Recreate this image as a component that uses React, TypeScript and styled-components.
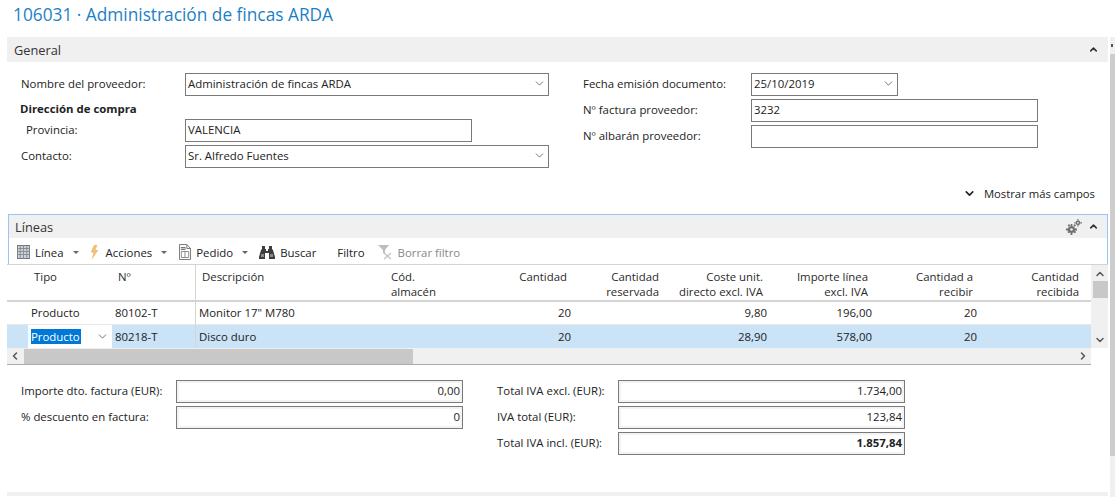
import React from "react";
import styled, { createGlobalStyle } from "styled-components";
import { ChevronDown, ChevronUp, ChevronLeft, ChevronRight } from "lucide-react";

const GlobalStyle = createGlobalStyle`
  html, body {
    margin: 0;
    padding: 0;
    background: #fff;
    overflow: hidden;
  }
  body {
    font-family: "Open Sans", "Noto Sans", sans-serif;
    font-size: 11.4px;
    color: #222;
  }
`;

const Shell = styled.div`
  display: flex;
  width: 1115px;
  height: 497px;
  overflow: hidden;
`;

const Page = styled.main`
  width: 1101px;
  margin-left: 7px;
  display: flex;
  flex-direction: column;
`;

const Title = styled.h1`
  margin: 0;
  height: 37px;
  padding: 3px 0 0 6px;
  box-sizing: border-box;
  font-size: 17.3px;
  line-height: 24px;
  font-weight: 400;
  color: #1c7fc6;
`;

const Band = styled.div`
  height: 25px;
  background: #f0f0f0;
  display: flex;
  align-items: center;
  justify-content: space-between;
  padding: 0 9px 0 7px;
  font-size: 12.8px;
  color: #333;
`;

const BandTools = styled.div`
  display: flex;
  align-items: center;
  gap: 6px;
  color: #333;
`;

const GeneralBody = styled.section`
  display: grid;
  grid-template-columns: 562px 1fr;
  padding: 11px 0 0 14px;
  height: 112px;
`;

const Column = styled.div`
  display: flex;
  flex-direction: column;
`;

const Row = styled.div<{ $labelWidth: number; $indent?: number }>`
  display: flex;
  align-items: center;
  height: 23px;
  margin-bottom: 3px;
  > label {
    width: ${(p) => p.$labelWidth - (p.$indent ?? 0)}px;
    margin-left: ${(p) => p.$indent ?? 0}px;
    padding-bottom: 2px;
    box-sizing: border-box;
    flex: none;
  }
`;

const GroupLabel = styled.div`
  height: 20px;
  line-height: 20px;
  font-weight: 700;
  margin-left: -1px;
  color: #222;
`;

const Field = styled.div<{ $width: number; $align?: string; $bold?: boolean; $shaded?: boolean }>`
  width: ${(p) => p.$width}px;
  height: 23px;
  box-sizing: border-box;
  border: 1px solid #7a7a7a;
  display: flex;
  align-items: center;
  justify-content: ${(p) => (p.$align === "right" ? "flex-end" : "space-between")};
  padding: 0 2px 2px;
  font-weight: ${(p) => (p.$bold ? 700 : 400)};
  color: #222;
  background: #fff;
  ${(p) => p.$shaded && "box-shadow: inset 0 0 0 2px #f3f3f3;"}
`;

const FieldChevron = styled(ChevronDown)`
  width: 13px;
  height: 13px;
  color: #555;
  stroke-width: 1.5;
`;

const MoreRow = styled.div`
  height: 16px;
  display: flex;
  justify-content: flex-end;
  align-items: center;
  gap: 8px;
  padding-right: 13px;
  margin-bottom: 13px;
  color: #222;
  font-size: 11.3px;
`;

const LinesPanel = styled.section`
  border: 1px solid #9cc4f2;
  border-bottom: none;
  height: 50px;
  box-sizing: border-box;
  margin-left: 1px;
`;

const LinesBand = styled(Band)`
  height: 23px;
  padding: 0 8px 0 6px;
`;

const Toolbar = styled.div`
  height: 25px;
  box-sizing: border-box;
  display: flex;
  align-items: center;
  padding: 3px 0 0 8px;
`;

const ToolButton = styled.div<{ $disabled?: boolean; $gap?: number }>`
  display: flex;
  align-items: center;
  gap: 5px;
  margin-right: ${(p) => p.$gap ?? 12}px;
  color: ${(p) => (p.$disabled ? "#888" : "#222")};
`;

const Caret = styled.span`
  width: 0;
  height: 0;
  border-left: 3px solid transparent;
  border-right: 3px solid transparent;
  border-top: 3px solid #666;
  margin-left: 4px;
`;

const GridWrap = styled.div`
  display: grid;
  grid-template-columns: 1084px 17px;
  border-top: 1px solid #d4d4d4;
`;

const DataGrid = styled.div`
  display: grid;
  grid-template-columns: 21px 84px 83px 193px 92px 95px 92px 104px 105px 105px 110px;
`;

const HeadCell = styled.div<{ $right?: number; $divider?: boolean; $pad?: number }>`
  height: 37px;
  box-sizing: border-box;
  border-bottom: 2px solid #d4d4d4;
  padding: 4px ${(p) => p.$right ?? 0}px 0 ${(p) => p.$pad ?? 6}px;
  text-align: ${(p) => (p.$right ? "right" : "left")};
  line-height: 15px;
  white-space: pre-line;
  color: #2a2a2a;
  ${(p) => p.$divider && "border-left: 1px solid #d4d4d4;"}
`;

const Cell = styled.div<{ $right?: boolean; $selected?: boolean; $divider?: boolean; $pad?: number }>`
  height: 23px;
  box-sizing: border-box;
  padding: 0 ${(p) => (p.$right ? 4 : 0)}px 0 ${(p) => p.$pad ?? 4}px;
  line-height: ${(p) => (p.$selected ? 23 : 22)}px;
  text-align: ${(p) => (p.$right ? "right" : "left")};
  background: ${(p) => (p.$selected ? "#cae3f7" : "#fff")};
  color: #222;
  ${(p) => !p.$selected && "border-bottom: 1px solid #e8e8e8;"}
  ${(p) => p.$divider && "border-left: 1px solid #d4d4d4;"}
`;

const EditCell = styled.div`
  height: 23px;
  background: #fff;
  display: flex;
  align-items: center;
  justify-content: space-between;
  padding: 0 2px 0 3px;
  margin-right: 1px;
`;

const SelectedText = styled.span`
  background: #0078d7;
  color: #fff;
  line-height: 15px;
  padding: 0 1px 0 0;
`;

const VScroll = styled.div`
  background: #f0f0f0;
  display: flex;
  flex-direction: column;
  align-items: center;
  justify-content: space-between;
  padding: 3px 0 2px;
  position: relative;
`;

const VThumb = styled.div`
  position: absolute;
  top: 16px;
  left: 2px;
  width: 15px;
  height: 17px;
  background: #c8c8c8;
`;

const HScroll = styled.div`
  width: 1084px;
  height: 17px;
  box-sizing: border-box;
  background: #f0f0f0;
  border-bottom: 1px solid #ababab;
  display: flex;
  align-items: center;
  justify-content: space-between;
  padding-right: 2px;
`;

const HThumbGroup = styled.div`
  display: flex;
  align-items: center;
  height: 100%;
`;

const HThumb = styled.div`
  width: 389px;
  height: 15px;
  background: #c8c8c8;
  margin-left: 3px;
`;

const ScrollArrowLeft = styled(ChevronLeft)`
  width: 12px;
  height: 12px;
  margin-left: 2px;
  color: #555;
  stroke-width: 3;
`;

const ScrollArrow = styled.span`
  display: inline-flex;
  color: #555;
  svg {
    width: 12px;
    height: 12px;
    stroke-width: 3;
  }
`;

const Totals = styled.section`
  display: grid;
  grid-template-columns: 476px 1fr;
  padding: 15px 0 0 14px;
  height: 127px;
  box-sizing: border-box;
`;

const BottomBand = styled.div`
  height: 4px;
  background: #f0f0f0;
`;

const PageScroll = styled.div`
  margin: 37px 0 0 2px;
  width: 5px;
  height: 460px;
  display: flex;
  flex-direction: column;
  background: #f0f0f0;
`;

const PageScrollCap = styled.div`
  height: 17px;
  display: flex;
  align-items: center;
  &::before {
    content: "";
    width: 2px;
    height: 3px;
    margin-left: 1px;
    background: #555;
  }
`;

const PageScrollThumb = styled.div`
  height: 402px;
  background: #cdcdcd;
`;

function GridIcon() {
  return (
    <svg width="13" height="14" viewBox="0 0 14 14" preserveAspectRatio="none">
      <rect x="0.5" y="0.5" width="13" height="13" fill="#c9d3e2" stroke="#777" />
      <path d="M0.5 3.5h13M0.5 6.5h13M0.5 9.5h13M3.5 0.5v13M7 0.5v13M10.5 0.5v13" stroke="#8c8c8c" strokeWidth="1" />
    </svg>
  );
}

function BoltIcon() {
  return (
    <svg width="12" height="15" viewBox="0 0 12 15">
      <path d="M5 0 8.5 0 6.5 5 9.5 5 2.5 15 4.4 7.6 1.5 7.6Z" fill="#f2be7c" />
    </svg>
  );
}

function DocIcon() {
  return (
    <svg width="12" height="16" viewBox="0 0 13 16" fill="none" preserveAspectRatio="none">
      <path d="M0.5 0.5h8l4 4v11h-12z" fill="#fff" stroke="#777" />
      <path d="M8.5 0.5v4h4" stroke="#777" />
      <rect x="2.5" y="3.5" width="4" height="2" fill="#b8cbe2" stroke="#777" />
      <path d="M2.5 7.5h8v6h-8zM6.5 7.5v6" stroke="#888" />
    </svg>
  );
}

function BinocularsIcon() {
  return (
    <svg width="16" height="13" viewBox="0 0 16 13">
      <path d="M3 0h3v3h1v2h2V3h1V0h3v3l1 1 2 7v2H10V7H6v6H0v-2l2-7 1-1z" fill="#3d3d3d" />
      <path d="M2 8h3v3H2zM11 8h3v3h-3z" fill="#8a8a8a" />
    </svg>
  );
}

function ClearFilterIcon() {
  return (
    <svg width="15" height="16" viewBox="0 0 15 16">
      <path d="M0 1h11L7 6v4L5 9V6z" fill="#bdbdbd" />
      <path d="M6 9l7 6M13 9l-7 6" stroke="#c4c4c4" strokeWidth="1.4" />
    </svg>
  );
}

function GearsIcon() {
  return (
    <svg width="16" height="16" viewBox="0 0 16 16">
      <g fill="#707070">
        <circle cx="5.5" cy="10.5" r="3.6" />
        <path d="M4.6 5h1.8v2h-1.8zM4.6 14h1.8v2h-1.8zM0 9.6h2v1.8H0zM9 9.6h2v1.8H9zM1.6 6.4l1.3-1.3 1.3 1.3-1.3 1.3zM7.6 13l1.3-1.3 1.3 1.3-1.3 1.3zM7.4 6.4l1.3-1.3 1.3 1.3-1.3 1.3zM1.4 13l1.3-1.3 1.3 1.3-1.3 1.3z" />
        <circle cx="12" cy="3.8" r="2.4" />
        <path d="M11.4 0h1.2v1.4h-1.2zM11.4 6.2h1.2v1.4h-1.2zM8.2 3.2h1.4v1.2H8.2zM14.4 3.2H16v1.2h-1.6z" />
      </g>
      <circle cx="5.5" cy="10.5" r="1.3" fill="#f0f0f0" />
      <circle cx="12" cy="3.8" r="0.9" fill="#f0f0f0" />
    </svg>
  );
}

const columns = [
  { key: "cod", title: "Cód.\nalmacén", pad: 3 },
  { key: "cantidad", title: "Cantidad", right: 8 },
  { key: "reservada", title: "Cantidad\nreservada", right: 8 },
  { key: "coste", title: "Coste unit.\ndirecto excl. IVA", right: 8 },
  { key: "importe", title: "Importe línea\nexcl. IVA", right: 8 },
  { key: "recibir", title: "Cantidad a\nrecibir", right: 8 },
  { key: "recibida", title: "Cantidad\nrecibida", right: 12 },
];

const rows = [
  { tipo: "Producto", no: "80102-T", desc: 'Monitor 17" M780', cantidad: "20", coste: "9,80", importe: "196,00", recibir: "20" },
  { tipo: "Producto", no: "80218-T", desc: "Disco duro", cantidad: "20", coste: "28,90", importe: "578,00", recibir: "20" },
];

export default function App() {
  return (
    <Shell>
      <GlobalStyle />
      <Page>
        <Title>106031 · Administración de fincas ARDA</Title>
        <Band>
          General
          <BandTools>
            <ChevronUp size={11} strokeWidth={3.5} />
          </BandTools>
        </Band>
        <GeneralBody>
          <Column>
            <Row $labelWidth={164}>
              <label>Nombre del proveedor:</label>
              <Field $width={364}>
                Administración de fincas ARDA
                <FieldChevron />
              </Field>
            </Row>
            <GroupLabel>Dirección de compra</GroupLabel>
            <Row $labelWidth={164} $indent={5}>
              <label>Provincia:</label>
              <Field $width={287}>VALENCIA</Field>
            </Row>
            <Row $labelWidth={164}>
              <label>Contacto:</label>
              <Field $width={364}>
                Sr. Alfredo Fuentes
                <FieldChevron />
              </Field>
            </Row>
          </Column>
          <Column>
            <Row $labelWidth={168}>
              <label>Fecha emisión documento:</label>
              <Field $width={147}>
                25/10/2019
                <FieldChevron />
              </Field>
            </Row>
            <Row $labelWidth={168}>
              <label>Nº factura proveedor:</label>
              <Field $width={287}>3232</Field>
            </Row>
            <Row $labelWidth={168}>
              <label>Nº albarán proveedor:</label>
              <Field $width={287} />
            </Row>
          </Column>
        </GeneralBody>
        <MoreRow>
          <ChevronDown size={13} strokeWidth={3} />
          Mostrar más campos
        </MoreRow>
        <LinesPanel>
          <LinesBand>
            Líneas
            <BandTools>
              <GearsIcon />
              <ChevronUp size={11} strokeWidth={3.5} />
            </BandTools>
          </LinesBand>
          <Toolbar>
            <ToolButton $gap={10}>
              <GridIcon />
              Línea
              <Caret />
            </ToolButton>
            <ToolButton $gap={12}>
              <BoltIcon />
              Acciones
              <Caret />
            </ToolButton>
            <ToolButton $gap={11}>
              <DocIcon />
              Pedido
              <Caret />
            </ToolButton>
            <ToolButton $gap={21}>
              <BinocularsIcon />
              Buscar
            </ToolButton>
            <ToolButton $gap={13}>Filtro</ToolButton>
            <ToolButton $disabled>
              <ClearFilterIcon />
              Borrar filtro
            </ToolButton>
          </Toolbar>
        </LinesPanel>
        <GridWrap>
          <DataGrid>
            <HeadCell />
            <HeadCell>Tipo</HeadCell>
            <HeadCell $pad={6}>Nº</HeadCell>
            <HeadCell $divider $pad={6}>Descripción</HeadCell>
            {columns.map((c) => (
              <HeadCell key={c.key} $right={c.right} $pad={c.pad}>
                {c.title}
              </HeadCell>
            ))}
            {rows.map((r, i) => {
              const sel = i === 1;
              return (
                <React.Fragment key={r.no}>
                  <Cell $selected={sel} />
                  {sel ? (
                    <EditCell>
                      <SelectedText>{r.tipo}</SelectedText>
                      <FieldChevron />
                    </EditCell>
                  ) : (
                    <Cell $pad={3}>{r.tipo}</Cell>
                  )}
                  <Cell $selected={sel} $pad={3}>{r.no}</Cell>
                  <Cell $selected={sel} $divider $pad={3}>{r.desc}</Cell>
                  <Cell $selected={sel} />
                  <Cell $selected={sel} $right>{r.cantidad}</Cell>
                  <Cell $selected={sel} />
                  <Cell $selected={sel} $right>{r.coste}</Cell>
                  <Cell $selected={sel} $right>{r.importe}</Cell>
                  <Cell $selected={sel} $right>{r.recibir}</Cell>
                  <Cell $selected={sel} />
                </React.Fragment>
              );
            })}
          </DataGrid>
          <VScroll>
            <VThumb />
            <ScrollArrow><ChevronUp /></ScrollArrow>
            <ScrollArrow><ChevronDown /></ScrollArrow>
          </VScroll>
        </GridWrap>
        <HScroll>
          <HThumbGroup>
            <ScrollArrowLeft />
            <HThumb />
          </HThumbGroup>
          <ScrollArrow><ChevronRight /></ScrollArrow>
        </HScroll>
        <Totals>
          <Column>
            <Row $labelWidth={155}>
              <label>Importe dto. factura (EUR):</label>
              <Field $width={287} $align="right" $shaded>0,00</Field>
            </Row>
            <Row $labelWidth={155}>
              <label>% descuento en factura:</label>
              <Field $width={287} $align="right" $shaded>0</Field>
            </Row>
          </Column>
          <Column>
            <Row $labelWidth={121}>
              <label>Total IVA excl. (EUR):</label>
              <Field $width={287} $align="right" $shaded>1.734,00</Field>
            </Row>
            <Row $labelWidth={121}>
              <label>IVA total (EUR):</label>
              <Field $width={287} $align="right" $shaded>123,84</Field>
            </Row>
            <Row $labelWidth={121}>
              <label>Total IVA incl. (EUR):</label>
              <Field $width={287} $align="right" $bold $shaded>1.857,84</Field>
            </Row>
          </Column>
        </Totals>
        <BottomBand />
      </Page>
      <PageScroll>
        <PageScrollCap />
        <PageScrollThumb />
      </PageScroll>
    </Shell>
  );
}
